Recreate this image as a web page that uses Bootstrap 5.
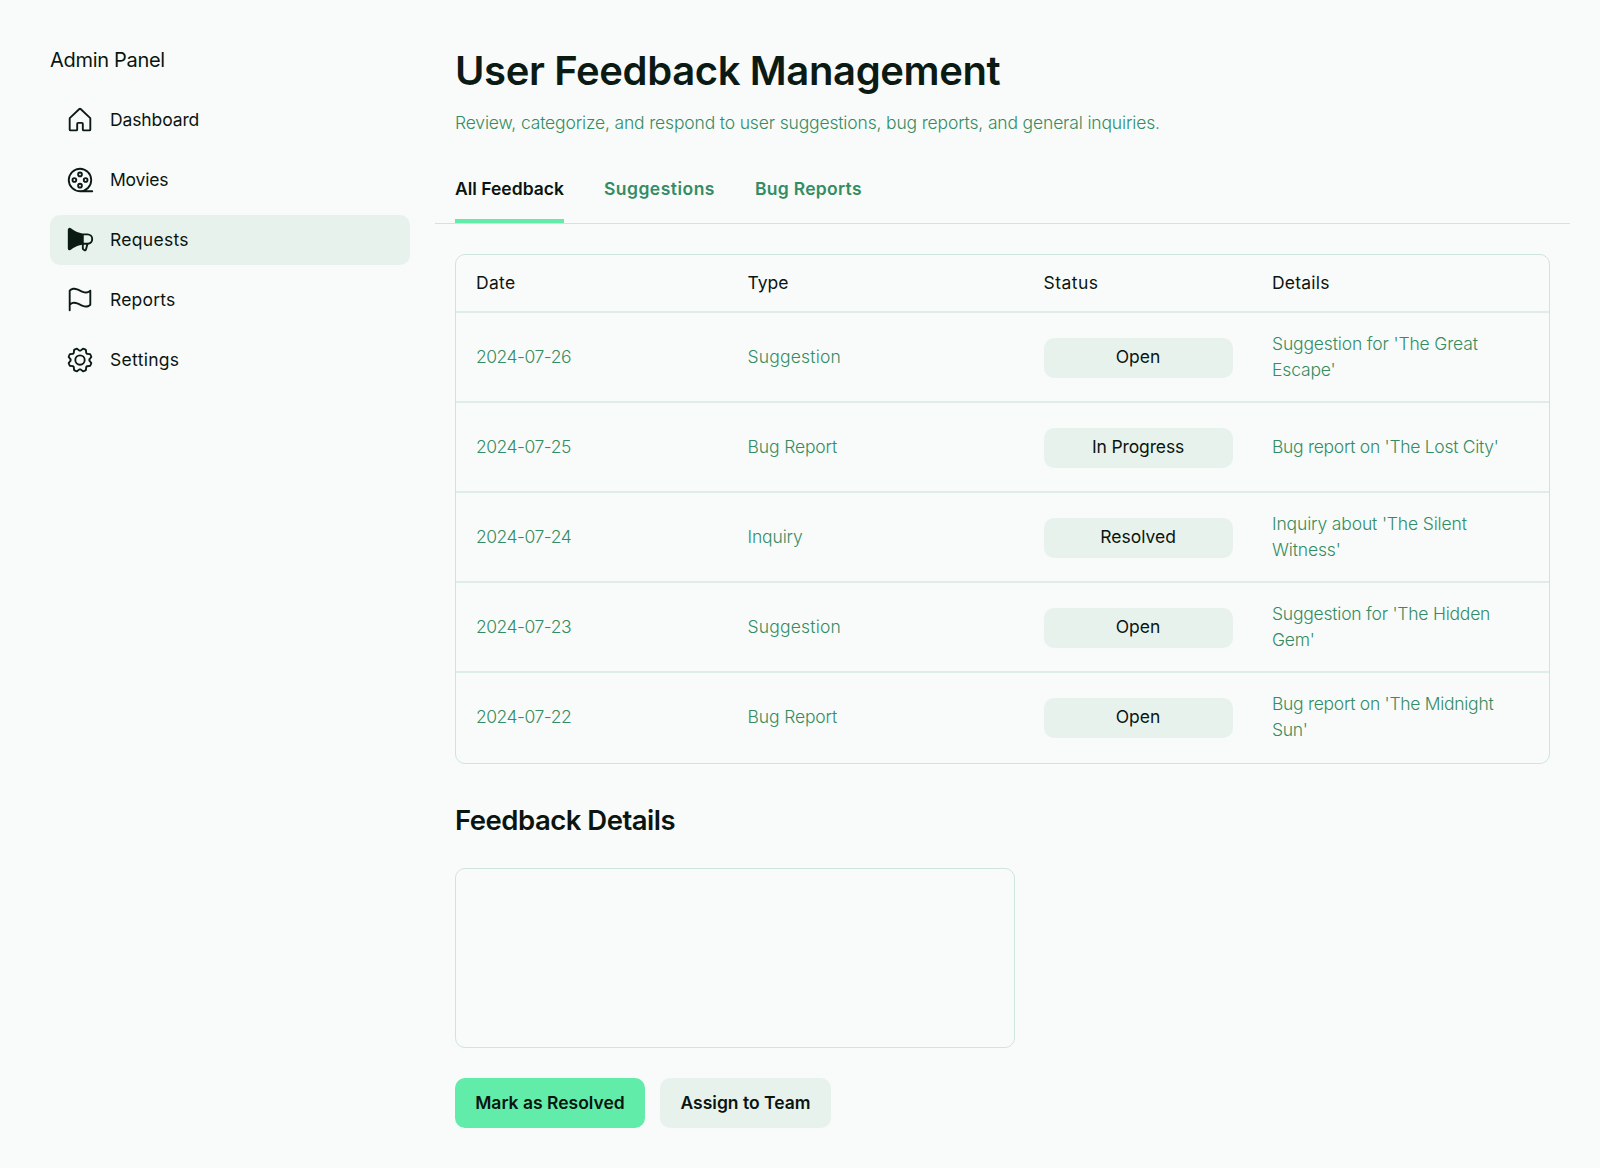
<!DOCTYPE html>
<html lang="en">
<head>
<meta charset="utf-8">
<meta name="viewport" content="width=device-width, initial-scale=1">
<title>User Feedback Management</title>
<link href="https://cdn.jsdelivr.net/npm/bootstrap@5.3.0/dist/css/bootstrap.min.css" rel="stylesheet">
<style>
:root{--ink:#0c1a14;--green:#348c63;--line:#cde5da;--soft:#e8f2ec;--accent:#62eca9}
body{font-family:Inter,"Liberation Sans",sans-serif;font-size:17.5px;line-height:26.25px;color:#0a1510;background:#f9fbfa;min-height:1168px}
.shell{padding:25px 30px;gap:5px}
.side{width:400px;padding:20px;flex:none}
.side-title{font-size:20px;line-height:30px;padding-top:.4px;margin-bottom:19.6px;letter-spacing:-.3px}
.side .nav{gap:10px}
.side .nav-link{height:50px;padding:0 15px;gap:15px;color:#0a1510;border-radius:10px}
.side .nav-link.active{background:var(--soft)}
.side svg{width:30px;height:30px;fill:var(--ink);flex:none}
.side .nav-link span{padding-top:1px}
.tight-1{letter-spacing:-.12px}
.tight-2{letter-spacing:-.15px}
.tight-3{letter-spacing:-.22px}
.tight-4{letter-spacing:-.28px}
.tight-5{letter-spacing:-.48px}
.wide-1{letter-spacing:.2px}
.wide-2{letter-spacing:.3px}
.wide-3{letter-spacing:.48px}
.main-col{min-width:0}
.head-block{padding:21px 20px 20px;gap:14px}
h1{font-size:40px;line-height:50px;font-weight:600;letter-spacing:-.37px;color:var(--ink)}
.sub{color:var(--green);font-weight:300;letter-spacing:-.157px}
.tabs{padding:0 20px;gap:40px;border-bottom:1px solid var(--line);height:67.75px}
.tabs .nav-link{padding:20px 0 16.75px;border-bottom:4px solid transparent;color:var(--green);font-weight:600;line-height:26.25px;white-space:nowrap}
.tabs .nav-link.active{color:#0a1510;border-color:var(--accent)}
.frame{margin:30.25px 20px 15px;border:1px solid var(--line);border-radius:10px;overflow:hidden;height:510px}
.frame table{table-layout:fixed;width:100%;border-collapse:separate;border-spacing:0;margin:0}
.frame th{font-weight:400;height:56px;padding:0 20px}
.frame td{height:90px;padding:0 20px;border-top:2px solid #deeee6;color:var(--green);font-weight:300;vertical-align:middle}
.pill{height:40px;margin:1px -.6px 0 0;padding-bottom:2px;border-radius:10px;background:var(--soft);color:#0a1510;font-weight:400}
h2{font-size:27.5px;line-height:34px;font-weight:600;letter-spacing:-.5px;padding:24px 20px 16px;margin:0}
.note{width:560px;height:180px;margin:15px 20px 30px;border:1px solid var(--line);border-radius:10px;background:transparent;resize:none;box-shadow:none}
.actions{padding:0 20px;gap:15px}
.actions .btn{height:50px;padding:0;border:0;border-radius:10px;font-size:17.5px;font-weight:600;color:#0a1510;white-space:nowrap}
.btn-go,.btn-go:hover{width:190px;background:var(--accent)}
.btn-soft,.btn-soft:hover{width:171px;background:var(--soft)}
</style>
<script src="https://cdn.jsdelivr.net/npm/bootstrap@5.3.0/dist/js/bootstrap.bundle.min.js"></script>
</head>
<body>
<div class="shell d-flex align-items-start">
  <aside class="side">
    <div class="side-title">Admin Panel</div>
    <nav class="nav flex-column">
      <a class="nav-link d-flex align-items-center" href="#"><svg viewBox="0 0 256 256"><path d="M218.83,103.77l-80-75.48a1.14,1.14,0,0,1-.11-.11,16,16,0,0,0-21.53,0l-.11.11L37.17,103.77A16,16,0,0,0,32,115.55V208a16,16,0,0,0,16,16H96a16,16,0,0,0,16-16V160h32v48a16,16,0,0,0,16,16h48a16,16,0,0,0,16-16V115.55A16,16,0,0,0,218.83,103.77ZM208,208H160V160a16,16,0,0,0-16-16H112a16,16,0,0,0-16,16v48H48V115.55l.11-.1L128,40l79.9,75.43.11.1Z"/></svg><span class="tight-1">Dashboard</span></a>
      <a class="nav-link d-flex align-items-center" href="#"><svg viewBox="0 0 256 256"><path d="M232,216H183.36A103.95,103.95,0,1,0,128,232H232a8,8,0,0,0,0-16ZM40,128a88,88,0,1,1,88,88A88.1,88.1,0,0,1,40,128Zm88-24a24,24,0,1,0-24-24A24,24,0,0,0,128,104Zm0-32a8,8,0,1,1-8,8A8,8,0,0,1,128,72Zm24,104a24,24,0,1,0-24,24A24,24,0,0,0,152,176Zm-32,0a8,8,0,1,1,8,8A8,8,0,0,1,120,176Zm56-24a24,24,0,1,0-24-24A24,24,0,0,0,176,152Zm0-32a8,8,0,1,1-8,8A8,8,0,0,1,176,120ZM80,104a24,24,0,1,0,24,24A24,24,0,0,0,80,104Zm0,32a8,8,0,1,1,8-8A8,8,0,0,1,80,136Z"/></svg><span class="tight-3">Movies</span></a>
      <a class="nav-link active d-flex align-items-center" href="#"><svg viewBox="0 0 256 256"><path d="M240,120a48.05,48.05,0,0,0-48-48H152.200c-2.91-.17-53.62-3.74-101.91-44.24A16,16,0,0,0,24,40V200a16,16,0,0,0,26.29,12.25c37.77-31.68,77-40.76,93.71-43.3v31.72A16,16,0,0,0,151.12,214l11,7.33A16,16,0,0,0,186.5,212l11.77-44.36A48.07,48.07,0,0,0,240,120ZM171,207.93l0,.11-11-7.33V168h21.6ZM192,152H160V88h32a32,32,0,1,1,0,64Z"/></svg><span class="wide-2">Requests</span></a>
      <a class="nav-link d-flex align-items-center" href="#"><svg viewBox="0 0 256 256"><path d="M34.76,42A8,8,0,0,0,32,48V216a8,8,0,0,0,16,0V171.77c26.79-21.16,49.87-9.75,76.45,3.41,16.4,8.11,34.06,16.85,53,16.85,13.93,0,28.54-4.75,43.82-18a8,8,0,0,0,2.76-6V48A8,8,0,0,0,210.76,42c-28,24.23-51.72,12.49-79.21-1.12C103.07,26.76,70.78,10.79,34.76,42ZM208,164.25c-26.79,21.16-49.87,9.74-76.45-3.41-25-12.35-52.81-26.13-83.55-8.4V51.79c26.79-21.16,49.87-9.75,76.45,3.4,25,12.35,52.82,26.13,83.55,8.4Z"/></svg><span class="wide-1">Reports</span></a>
      <a class="nav-link d-flex align-items-center" href="#"><svg viewBox="0 0 256 256"><path d="M128,80a48,48,0,1,0,48,48A48.05,48.05,0,0,0,128,80Zm0,80a32,32,0,1,1,32-32A32,32,0,0,1,128,160Zm88-29.84q.06-2.16,0-4.32l14.92-18.64a8,8,0,0,0,1.48-7.06,107.21,107.21,0,0,0-10.88-26.25,8,8,0,0,0-6-3.93l-23.72-2.64q-1.48-1.56-3-3L186,40.54a8,8,0,0,0-3.94-6,107.71,107.71,0,0,0-26.25-10.87,8,8,0,0,0-7.06,1.49L130.16,40Q128,40,125.84,40L107.2,25.11a8,8,0,0,0-7.06-1.48A107.6,107.6,0,0,0,73.89,34.51a8,8,0,0,0-3.93,6L67.32,64.27q-1.56,1.49-3,3L40.54,70a8,8,0,0,0-6,3.94,107.71,107.71,0,0,0-10.87,26.25,8,8,0,0,0,1.49,7.06L40,125.84Q40,128,40,130.16L25.11,148.8a8,8,0,0,0-1.48,7.06,107.21,107.21,0,0,0,10.88,26.25,8,8,0,0,0,6,3.93l23.72,2.64q1.49,1.56,3,3L70,215.46a8,8,0,0,0,3.94,6,107.71,107.71,0,0,0,26.25,10.87,8,8,0,0,0,7.06-1.49L125.84,216q2.16.06,4.32,0l18.64,14.92a8,8,0,0,0,7.06,1.48,107.21,107.21,0,0,0,26.25-10.88,8,8,0,0,0,3.93-6l2.64-23.72q1.56-1.48,3-3L215.46,186a8,8,0,0,0,6-3.94,107.71,107.71,0,0,0,10.87-26.25,8,8,0,0,0-1.49-7.06Zm-16.1-6.5a73.93,73.93,0,0,1,0,8.68,8,8,0,0,0,1.74,5.48l14.19,17.73a91.57,91.57,0,0,1-6.23,15L187,173.11a8,8,0,0,0-5.1,2.64,74.11,74.11,0,0,1-6.14,6.14,8,8,0,0,0-2.64,5.1l-2.51,22.58a91.32,91.32,0,0,1-15,6.23l-17.74-14.19a8,8,0,0,0-5-1.75h-.48a73.93,73.93,0,0,1-8.68,0,8,8,0,0,0-5.48,1.74L100.45,215.8a91.57,91.57,0,0,1-15-6.23L82.89,187a8,8,0,0,0-2.64-5.1,74.11,74.11,0,0,1-6.14-6.14,8,8,0,0,0-5.1-2.64L46.43,170.6a91.32,91.32,0,0,1-6.23-15l14.19-17.74a8,8,0,0,0,1.74-5.48,73.93,73.93,0,0,1,0-8.68,8,8,0,0,0-1.74-5.48L40.2,100.45a91.57,91.57,0,0,1,6.23-15L69,82.89a8,8,0,0,0,5.1-2.64,74.11,74.11,0,0,1,6.14-6.14A8,8,0,0,0,82.89,69L85.4,46.43a91.32,91.32,0,0,1,15-6.23l17.74,14.19a8,8,0,0,0,5.48,1.74,73.93,73.93,0,0,1,8.68,0,8,8,0,0,0,5.48-1.74L155.55,40.2a91.57,91.57,0,0,1,15,6.23L173.11,69a8,8,0,0,0,2.64,5.1,74.11,74.11,0,0,1,6.14,6.14,8,8,0,0,0,5.1,2.64l22.58,2.51a91.32,91.32,0,0,1,6.23,15l-14.19,17.74A8,8,0,0,0,199.87,123.66Z"/></svg><span class="wide-2">Settings</span></a>
    </nav>
  </aside>
  <main class="main-col flex-grow-1">
    <header class="head-block d-flex flex-column">
      <h1 class="m-0">User Feedback Management</h1>
      <p class="sub m-0">Review, categorize, and respond to user suggestions, bug reports, and general inquiries.</p>
    </header>
    <nav class="tabs nav flex-nowrap">
      <a class="nav-link active" href="#">All Feedback</a>
      <a class="nav-link wide-3" href="#">Suggestions</a>
      <a class="nav-link wide-2" href="#">Bug Reports</a>
    </nav>
    <div class="frame">
      <table>
        <colgroup><col style="width:271.5px"><col style="width:296px"><col style="width:228.5px"><col></colgroup>
        <thead><tr><th class="wide-2">Date</th><th>Type</th><th class="wide-3">Status</th><th class="wide-1">Details</th></tr></thead>
        <tbody>
          <tr><td class="tight-5">2024-07-26</td><td class="wide-1">Suggestion</td><td><div class="pill d-flex align-items-center justify-content-center">Open</div></td><td class="tight-2">Suggestion for 'The Great<br>Escape'</td></tr>
          <tr><td class="tight-5">2024-07-25</td><td class="tight-1">Bug Report</td><td><div class="pill tight-1 d-flex align-items-center justify-content-center">In Progress</div></td><td class="tight-4">Bug report on 'The Lost City'</td></tr>
          <tr><td class="tight-5">2024-07-24</td><td class="tight-2">Inquiry</td><td><div class="pill d-flex align-items-center justify-content-center">Resolved</div></td><td class="tight-2">Inquiry about 'The Silent<br>Witness'</td></tr>
          <tr><td class="tight-5">2024-07-23</td><td class="wide-1">Suggestion</td><td><div class="pill d-flex align-items-center justify-content-center">Open</div></td><td class="tight-3">Suggestion for 'The Hidden<br>Gem'</td></tr>
          <tr><td class="tight-5">2024-07-22</td><td class="tight-1">Bug Report</td><td><div class="pill d-flex align-items-center justify-content-center">Open</div></td><td class="tight-4">Bug report on 'The Midnight<br>Sun'</td></tr>
        </tbody>
      </table>
    </div>
    <h2>Feedback Details</h2>
    <textarea class="note form-control" aria-label="Feedback details"></textarea>
    <div class="actions d-flex">
      <button class="btn btn-go" type="button">Mark as Resolved</button>
      <button class="btn btn-soft" type="button">Assign to Team</button>
    </div>
  </main>
</div>
</body>
</html>
